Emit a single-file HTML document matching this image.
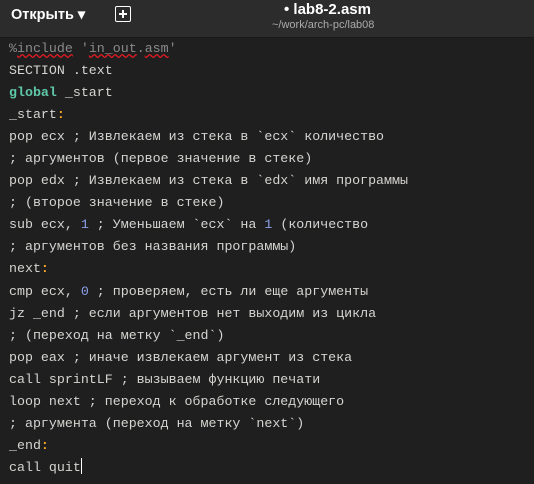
<!DOCTYPE html>
<html><head><meta charset="utf-8"><style>
body{margin:0;width:534px;height:484px;background:#1f1f1f;overflow:hidden;font-family:"Liberation Sans",sans-serif}
.hdr{position:absolute;left:0;top:0;width:534px;height:37px;background:#2c2c2c;border-bottom:1px solid #1a1a1a}
.open{position:absolute;left:11px;top:7px;color:#fff;font-size:14.5px;font-weight:bold}
.plus{position:absolute;left:115px;top:6px;width:14px;height:14px;border:1.6px solid #fff;border-radius:2px}
.plus:before{content:"";position:absolute;left:3px;top:6px;width:8px;height:2px;background:#fff}
.plus:after{content:"";position:absolute;left:6px;top:3px;width:2px;height:8px;background:#fff}
.title{position:absolute;left:284px;top:1px;color:#fff;font-size:15px;font-weight:bold}
.sub{position:absolute;left:272px;top:19px;color:#aaa;font-size:11px}
.code{position:absolute;left:9px;top:38px;font-family:"Liberation Mono","DejaVu Sans Mono",monospace;font-size:13.3px;line-height:22.05px;color:#d6d5d2;white-space:pre}
.k{color:#5fc8a8;font-weight:bold}.o{color:#f5a623;font-weight:bold}.n{color:#8ca0e8}.g{color:#8a8a8a}
.u{text-decoration:underline wavy #e01b24}
.cur{display:inline-block;width:1px;height:16px;background:#fff;vertical-align:-3px}
</style></head><body>
<div class="hdr"><div class="open">Открыть ▾</div><div class="plus"></div><div class="title">• lab8-2.asm</div><div class="sub">~/work/arch-pc/lab08</div></div>
<div class="code"><span class="g">%<span class="u">include</span> '<span class="u">in_out</span>.<span class="u">asm</span>'</span>
SECTION .text
<span class="k">global</span> _start
_start<span class="o">:</span>
pop ecx ; Извлекаем из стека в `ecx` количество
; аргументов (первое значение в стеке)
pop edx ; Извлекаем из стека в `edx` имя программы
; (второе значение в стеке)
sub ecx, <span class="n">1</span> ; Уменьшаем `ecx` на <span class="n">1</span> (количество
; аргументов без названия программы)
next<span class="o">:</span>
cmp ecx, <span class="n">0</span> ; проверяем, есть ли еще аргументы
jz _end ; если аргументов нет выходим из цикла
; (переход на метку `_end`)
pop eax ; иначе извлекаем аргумент из стека
call sprintLF ; вызываем функцию печати
loop next ; переход к обработке следующего
; аргумента (переход на метку `next`)
_end<span class="o">:</span>
call quit<span class="cur"></span></div>
</body></html>
